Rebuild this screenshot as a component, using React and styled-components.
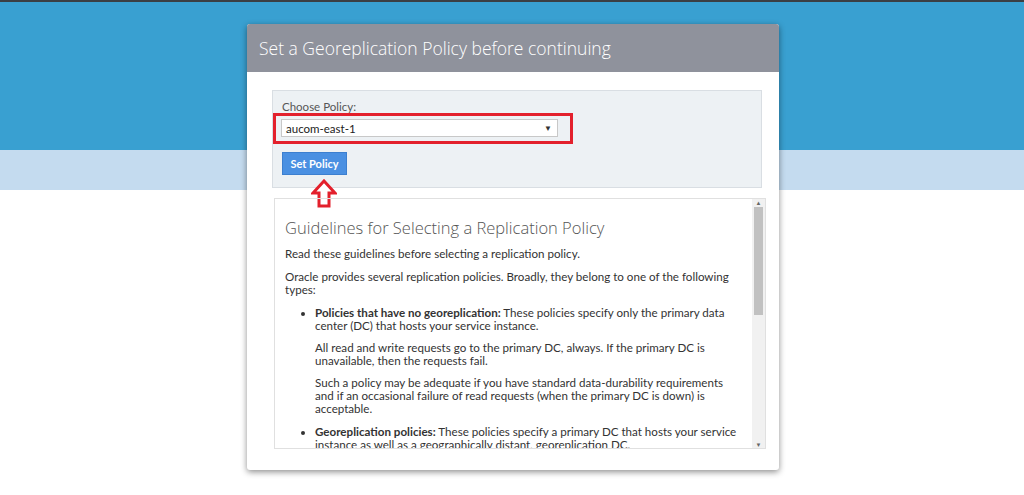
import React from "react";
import styled, { createGlobalStyle } from "styled-components";

const Global = createGlobalStyle`
  html, body { margin: 0; padding: 0; background: #fff; }
  body { font-family: "Lato", "Open Sans", sans-serif; }
`;

const Page = styled.div`
  position: relative;
  width: 1024px;
  height: 495px;
  overflow: hidden;
  background: #fff;
  border-top: 2px solid #3b3f44;
  box-sizing: border-box;
`;
const BlueBand = styled.div`height: 148px; background: #39a0d1;`;
const LightBand = styled.div`height: 40px; background: #c4dbef;`;

const Modal = styled.div`
  position: absolute;
  left: 247px; top: 22px;
  width: 532px; height: 446px;
  background: #fff;
  border-radius: 3px;
  box-shadow: 0 2px 6px rgba(0,0,0,0.45);
  overflow: hidden;
  display: flex; flex-direction: column;
`;
const Header = styled.div`
  height: 48px; background: #8f929c;
  display: flex; align-items: center; padding-left: 12px;
  color: #fff; font-size: 17.5px; font-weight: 300;
  font-family: "Open Sans", sans-serif;
`;
const Body = styled.div`
  padding: 18px 17px 20px 25px;
  display: flex; flex-direction: column; gap: 10px;
`;
const Well = styled.div`
  position: relative;
  background: #edf1f4;
  border: 1px solid #d9dee3;
  height: 98px;
  padding: 10px 0 0 9px;
  box-sizing: border-box;
`;
const Label = styled.div`font-size: 11.5px; line-height: 12px; color: #555;`;
const RedBox = styled.div`
  width: 289px; height: 18px;
  border: 3px solid #e3202c;
  margin-left: -9px;
  padding: 3px 0 4px 5px;
  box-sizing: content-box;
`;
const Select = styled.div`
  width: 277px; height: 18px;
  background: #fff; border: 1px solid #c8c8c8;
  display: flex; align-items: center; justify-content: space-between;
  padding: 0 5px 0 4px; box-sizing: border-box;
  font-size: 11.5px; color: #222;
`;
const Caret = styled.span`font-size: 8px; color: #333;`;
const Button = styled.div`
  margin-top: 8px;
  width: 65px; height: 23px;
  background: #4a90e2; border: 1px solid #3c7fcf;
  box-sizing: border-box;
  color: #fff; font-size: 11px; font-weight: 700;
  display: flex; align-items: center; justify-content: center;
`;
const Arrow = styled.svg`position: absolute; left: 38px; top: 88px;`;

const ScrollWrap = styled.div`
  position: relative;
  height: 249px; margin-left: 2px; margin-right: -4px;
  border: 1px solid #e0e0e0;
  overflow: hidden;
`;
const Content = styled.div`
  padding: 0 26px 0 10px;
  color: #333; font-size: 11.6px; line-height: 13px;
`;
const Track = styled.div`
  position: absolute; right: 0; top: 0; bottom: 0; width: 13px;
  background: #f1f1f1;
  display: flex; flex-direction: column; align-items: center;
  font-size: 6px; color: #666;
`;
const Thumb = styled.div`width: 9px; height: 108px; background: #c1c1c1; margin: 1px 0 auto;`;
const H = styled.h3`
  font-size: 16.5px; font-weight: 300; color: #555; margin: 19px 0 9px; line-height: 20px;
  font-family: "Open Sans", sans-serif;
`;
const P = styled.p`margin: 0 0 10px;`;
const UL = styled.ul`margin: 0; padding-left: 30px;`;
const LI = styled.li`margin-bottom: 10px; p { margin: 9px 0 0; }`;

export default function App() {
  return (
    <Page>
      <Global />
      <BlueBand />
      <LightBand />
      <Modal>
        <Header>Set a Georeplication Policy before continuing</Header>
        <Body>
          <Well>
            <Label>Choose Policy:</Label>
            <RedBox>
              <Select>aucom-east-1<Caret>▼</Caret></Select>
            </RedBox>
            <Button>Set Policy</Button>
            <Arrow width="26" height="30" viewBox="0 0 26 30">
              <path d="M13 2 L24 14 L18 14 L18 27 L8 27 L8 14 L2 14 Z" fill="#fff" stroke="#e3202c" strokeWidth="3" strokeLinejoin="miter" />
            </Arrow>
          </Well>
          <ScrollWrap>
            <Content>
              <H>Guidelines for Selecting a Replication Policy</H>
              <P>Read these guidelines before selecting a replication policy.</P>
              <P>Oracle provides several replication policies. Broadly, they belong to one of the following types:</P>
              <UL>
                <LI><b>Policies that have no georeplication:</b> These policies specify only the primary data center (DC) that hosts your service instance.
                  <p>All read and write requests go to the primary DC, always. If the primary DC is unavailable, then the requests fail.</p>
                  <p>Such a policy may be adequate if you have standard data-durability requirements and if an occasional failure of read requests (when the primary DC is down) is acceptable.</p>
                </LI>
                <LI><b>Georeplication policies:</b> These policies specify a primary DC that hosts your service instance as well as a geographically distant, georeplication DC.
                  <p>Write requests that you send to the global namespace URL are routed to the primary DC. Read requests can be handled by the primary DC or the georeplication DC.</p>
                </LI>
              </UL>
            </Content>
            <Track>
              <span>▲</span>
              <Thumb />
              <span>▼</span>
            </Track>
          </ScrollWrap>
        </Body>
      </Modal>
    </Page>
  );
}
